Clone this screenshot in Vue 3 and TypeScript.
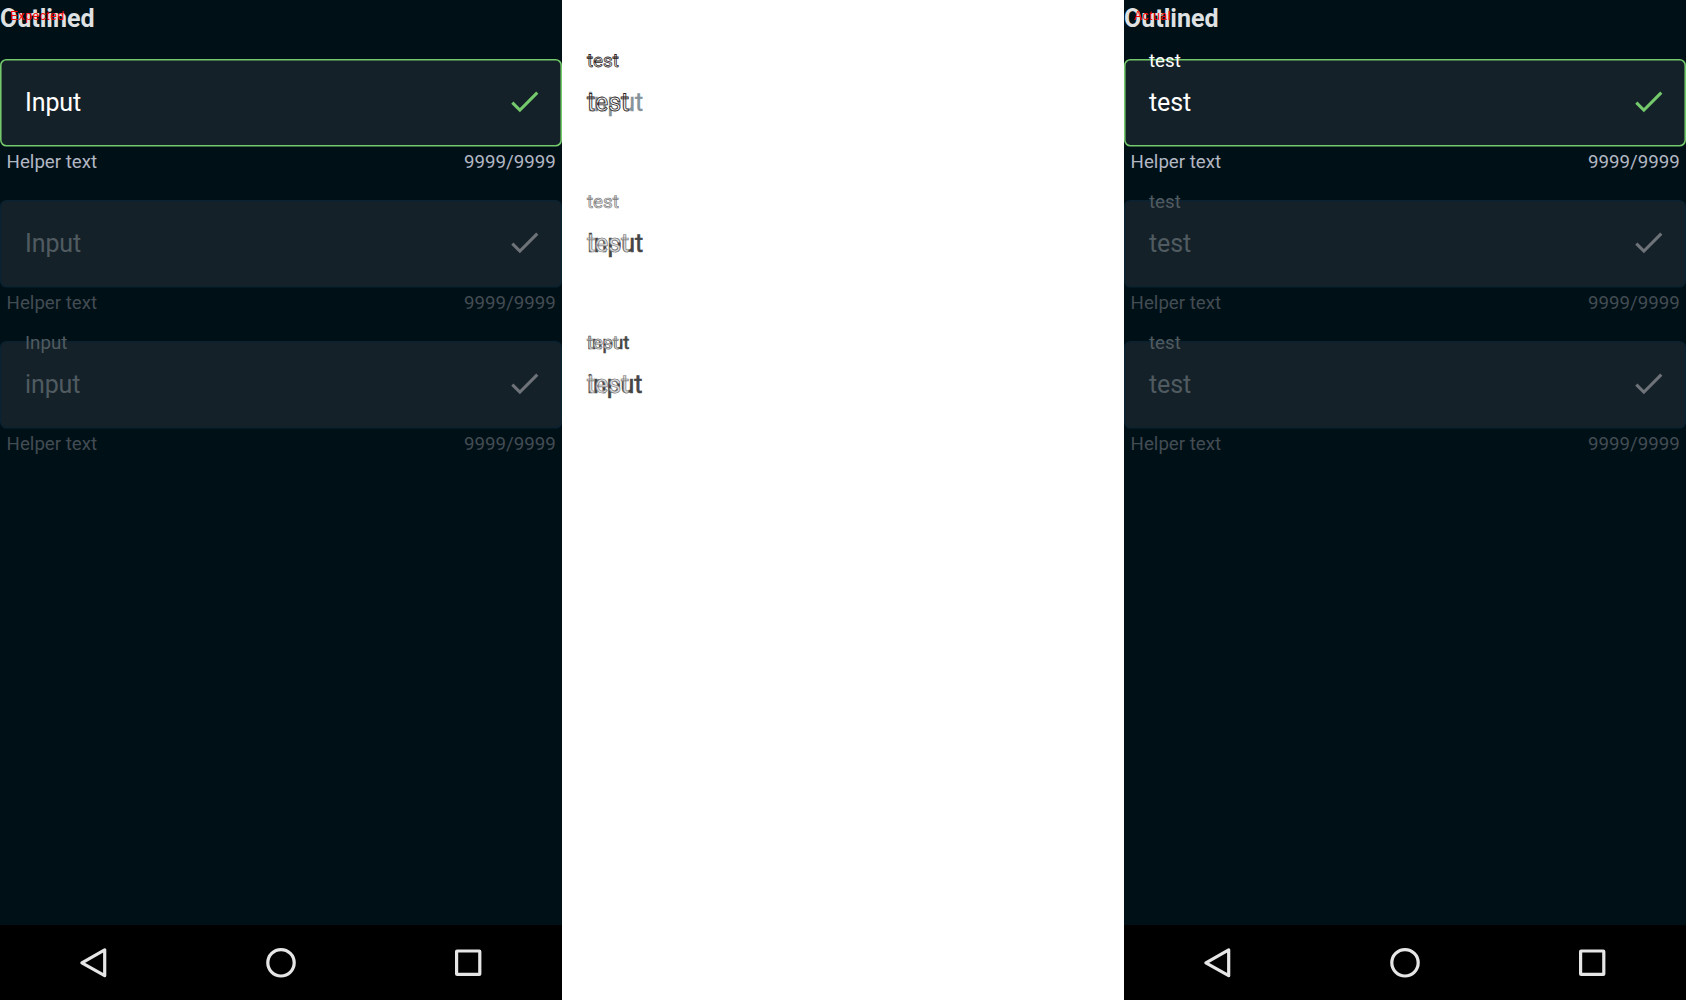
<script setup lang="ts">
interface Row {
  label: string
  value: string
  disabled: boolean
}

interface Screen {
  tag: string
  side: string
  rows: Row[]
}

const expected: Screen = {
  tag: 'Expected',
  side: 'expected',
  rows: [
    { label: '', value: 'Input', disabled: false },
    { label: '', value: 'Input', disabled: true },
    { label: 'Input', value: 'input', disabled: true },
  ],
}

const actual: Screen = {
  tag: 'Actual',
  side: 'actual',
  rows: [
    { label: 'test', value: 'test', disabled: false },
    { label: 'test', value: 'test', disabled: true },
    { label: 'test', value: 'test', disabled: true },
  ],
}

// null marks the column that shows the difference between both screens
const columns: (Screen | null)[] = [expected, null, actual]
</script>

<template>
  <main class="compare">
    <template v-for="(screen, i) in columns" :key="i">
      <section v-if="screen" class="screen" :class="screen.side">
        <h1 class="title">Outlined</h1>
        <span class="tag">{{ screen.tag }}</span>
        <div class="rows">
          <div v-for="(row, r) in screen.rows" :key="r" class="row" :class="{ disabled: row.disabled }">
            <div class="field">
              <span class="label">{{ row.label }}</span>
              <svg class="frame" width="562" height="88" viewBox="0 0 562 88">
                <rect x="0.78" y="0.78" width="560.44" height="85.94" rx="5.6" />
              </svg>
              <span class="value">{{ row.value }}</span>
              <svg class="check" width="37" height="37" viewBox="0 0 24 24">
                <path d="M9 16.17 4.83 12l-1.42 1.41L9 19 21 7l-1.41-1.41z" />
              </svg>
            </div>
            <div class="help">
              <span>Helper text</span>
              <span>9999/9999</span>
            </div>
          </div>
        </div>
        <nav class="nav">
          <span class="key">
            <svg width="36" height="36" viewBox="0 0 36 36">
              <path d="M28.7 4.9v25.8L5.9 17.8z" />
            </svg>
          </span>
          <span class="key">
            <svg width="36" height="36" viewBox="0 0 36 36">
              <circle cx="18" cy="17.8" r="13.2" />
            </svg>
          </span>
          <span class="key">
            <svg width="36" height="36" viewBox="0 0 36 36">
              <rect x="6.6" y="6" width="23.2" height="23.4" rx="0.5" />
            </svg>
          </span>
        </nav>
      </section>
      <section v-else class="diff">
        <div v-for="(row, r) in expected.rows" :key="r" class="delta" :class="{ muted: row.disabled }">
          <div class="layers small">
            <span class="solid">{{ row.label }}</span>
            <span class="edge">{{ actual.rows[r].label }}</span>
          </div>
          <div class="layers large">
            <span class="solid">{{ row.value }}</span>
            <span class="edge">{{ actual.rows[r].value }}</span>
          </div>
        </div>
      </section>
    </template>
  </main>
</template>

<style>
body {
  margin: 0;
  background: #fff;
}
</style>

<style scoped>
.compare {
  display: flex;
  width: 1686px;
  height: 1000px;
  overflow: hidden;
  background: #fff;
  font-family: Roboto, sans-serif;
}

.screen {
  position: relative;
  display: flex;
  flex-direction: column;
  width: 562px;
  height: 1000px;
  background: #001017;
}

.title {
  height: 38px;
  margin: 0 0 21px;
  color: #dfe1e2;
  font-size: 25px;
  font-weight: 700;
  line-height: 38px;
}

.tag {
  position: absolute;
  top: 9px;
  left: 10px;
  color: #f00;
  font-family: "Liberation Sans", sans-serif;
  font-size: 12px;
  line-height: 14px;
  letter-spacing: 0.6px;
}

.rows {
  flex: 1;
}

.row {
  height: 141px;
}

.field {
  position: relative;
  display: flex;
  align-items: center;
  justify-content: space-between;
  box-sizing: border-box;
  height: 87px;
  padding: 0 19px 0 25px;
}

.frame {
  position: absolute;
  top: 0;
  left: 0;
}

.frame rect {
  fill: #152128;
  stroke: #73c96b;
  stroke-width: 1.56;
}

.label {
  position: absolute;
  z-index: 1;
  top: -9px;
  left: 25px;
  color: #fff;
  font-size: 18.7px;
  line-height: 22px;
}

.value {
  position: relative;
  color: #fff;
  font-size: 25px;
  line-height: 30px;
  letter-spacing: -0.1px;
}

.check {
  position: relative;
  margin-bottom: 2px;
  fill: #73c96b;
}

.help {
  display: flex;
  justify-content: space-between;
  padding: 4px 6.2px 0 6.6px;
  color: #b2b7c3;
  font-size: 18.7px;
  line-height: 24px;
}

.disabled .frame rect {
  stroke: #0b2230;
}

.disabled .label,
.disabled .value {
  color: #505b61;
}

.disabled .check {
  fill: #6d7378;
}

.disabled .help {
  color: #434c53;
}

.nav {
  display: flex;
  justify-content: center;
  height: 75px;
  background: #000;
}

.key {
  display: flex;
  align-items: center;
  justify-content: center;
  width: 187px;
}

.key svg {
  fill: none;
  stroke: #e6e6e6;
  stroke-width: 3.2;
  stroke-linejoin: round;
}

.diff {
  box-sizing: border-box;
  width: 562px;
  padding: 50px 0 0 25px;
}

.delta {
  height: 141px;
}

.layers {
  display: grid;
  justify-content: start;
}

.layers span {
  grid-area: 1 / 1;
}

.small {
  height: 38px;
  font-size: 18.7px;
  line-height: 22px;
}

.large {
  font-size: 25px;
  line-height: 30px;
  letter-spacing: -0.1px;
}

.solid {
  color: #85929a;
  -webkit-text-stroke: 0.4px #85929a;
}

.edge {
  color: #fff;
  -webkit-text-stroke: 0.8px #2c2423;
}

.muted .solid {
  color: #454545;
  -webkit-text-stroke: 0.6px #454545;
}

.muted .edge {
  color: #e4e4e4;
  -webkit-text-stroke: 0.7px #7c7c7c;
}
</style>
